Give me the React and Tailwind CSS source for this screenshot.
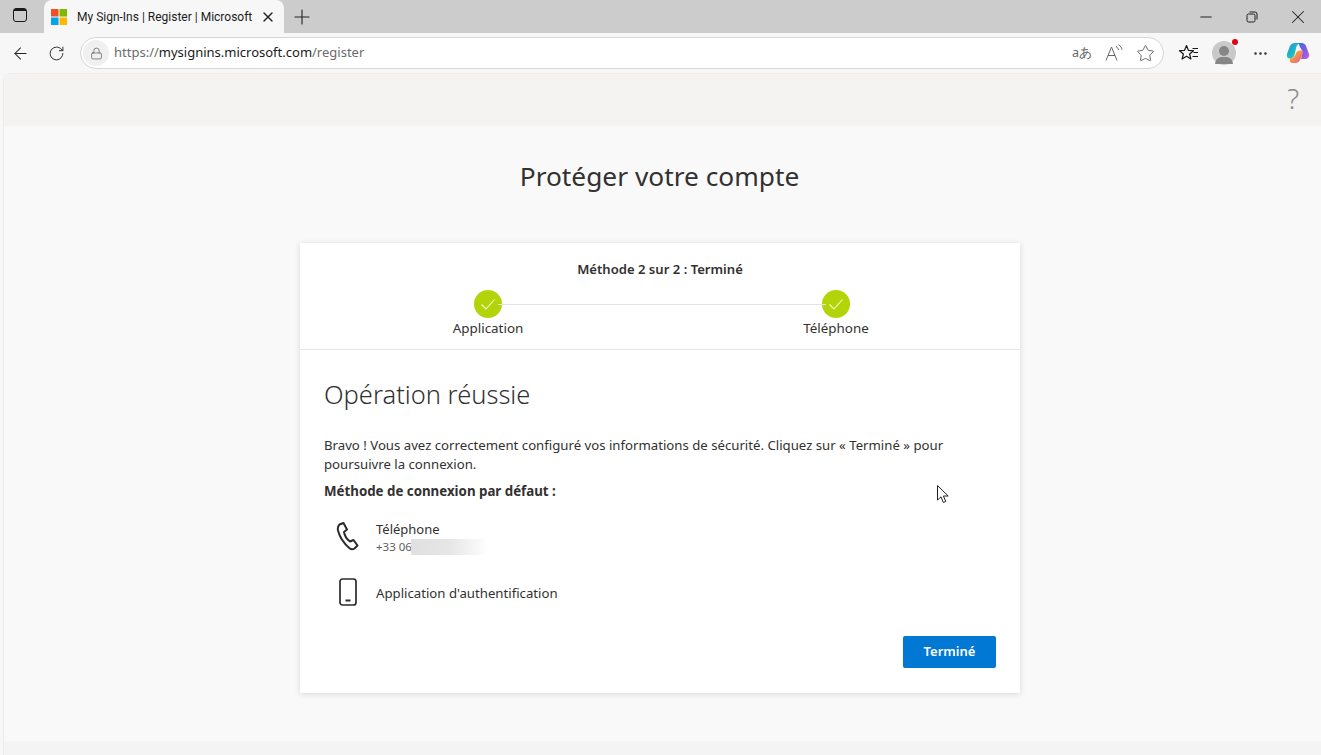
import React from 'react';
import { ArrowLeft, RotateCw, Lock, Star, Plus, X, Minus, MoreHorizontal } from 'lucide-react';

const MsLogo = () => (
  <svg width="16" height="16" viewBox="0 0 16 16" className="shrink-0">
    <rect x="0" y="0" width="7.500" height="7.500" fill="#f25022" />
    <rect x="8.500" y="0" width="7.500" height="7.500" fill="#7fba00" />
    <rect x="0" y="8.500" width="7.500" height="7.500" fill="#00a4ef" />
    <rect x="8.500" y="8.500" width="7.500" height="7.500" fill="#ffb900" />
  </svg>
);

const CopilotLogo = () => (
  <svg width="24" height="24" viewBox="0 0 24 24">
    <defs>
      <linearGradient id="cpA" x1="0" y1="0" x2="1" y2="1">
        <stop offset="0" stopColor="#1f8fe8" />
        <stop offset="0.6" stopColor="#1fc0c0" />
        <stop offset="1" stopColor="#7bd24a" />
      </linearGradient>
      <linearGradient id="cpB" x1="0" y1="0" x2="1" y2="1">
        <stop offset="0" stopColor="#2f6fe8" />
        <stop offset="0.5" stopColor="#7a5ae8" />
        <stop offset="1" stopColor="#d65ad8" />
      </linearGradient>
      <linearGradient id="cpC" x1="0" y1="0" x2="1" y2="1">
        <stop offset="0" stopColor="#f7c433" />
        <stop offset="0.6" stopColor="#f2805a" />
        <stop offset="1" stopColor="#e85aa8" />
      </linearGradient>
    </defs>
    <path d="M9 2h5c-2 .5-3.200 2.500-3.800 4.500L8.500 14c-.6 2-2.500 3.500-4.500 3.500C1.500 17.500.3 15.500 1 13L3.500 6C4.500 3.500 6.500 2 9 2Z" fill="url(#cpA)" />
    <path d="M12 2h3.500c2.500 0 4 1.500 4.700 3.500l2.800 7.500c.7 2.500-1 5-3.500 5h-4.500l1-4c.5-2 .5-3-.3-5L14 6c-.5-1.500-1-3-2-4Z" fill="url(#cpB)" />
    <path d="M4 17.500c2.500 0 4.300-1.200 5.300-3.500l.7-2c.8-1.500 2-2.500 3.500-2.500h3.500c-.5 3.500-1.500 7-3 9.500-1 2-2.500 3-4.500 3H7c-2.500 0-4-1.500-3-4.500Z" fill="url(#cpC)" />
  </svg>
);

const FavoritesIcon = () => (
  <svg width="20" height="18" viewBox="0 0 20 18" fill="none" stroke="#1a1a1a" strokeWidth="1.200" strokeLinejoin="round">
    <path d="M7.500 1.500 9.400 6.300l5.100.4-3.900 3.300 1.300 5-4.400-2.700L3.100 15 4.400 10 .5 6.700l5.100-.4Z" />
    <path d="M13.500 4.500h5.500M14.500 8.500h4.500M13.500 12.500h5.500" />
  </svg>
);

const ReadAloudIcon = () => (
  <svg width="20" height="18" viewBox="0 0 20 18" fill="none" stroke="#666" strokeWidth="1">
    <path d="M1 16.500 6.500 3l5.500 13.500M3 11.500h7" />
    <path d="M11 2.500c1.500.8 2.300 2 2.500 3.500M13.500 .8c2 1 3.200 2.800 3.500 5" />
  </svg>
);

const StepCheck = () => (
  <div className="w-7 h-7 rounded-full bg-[#b4d40a] flex items-center justify-center">
    <svg width="16" height="16" viewBox="0 0 16 16" fill="none" stroke="#f4f9d0" strokeWidth="1.100">
      <path d="M1.500 8.500 6 13 14.500 3.500" />
    </svg>
  </div>
);

const PhoneIcon = () => (
  <svg width="24" height="30" viewBox="0 0 24 30" fill="none" stroke="#2b2b2b" strokeWidth="2" strokeLinejoin="round">
    <path d="M3.500 3.500 7.500 2l3.500 6.500-3 2.500c.5 3 3 7.500 6 9.500l3.500-1.500 4 5.500-3 3c-1.500 1-3.500.8-5-.3C8 22.500 3.500 15.500 2 9.500c-.5-2.500 0-4.500 1.500-6Z" />
  </svg>
);

const MobileIcon = () => (
  <svg width="18" height="28" viewBox="0 0 18 28" fill="none" stroke="#2b2b2b" strokeWidth="1.700">
    <rect x="1" y="1" width="16" height="26" rx="2.500" />
    <path d="M6.500 22.500h5" strokeWidth="2" />
  </svg>
);

const Cursor = () => (
  <svg width="12" height="19" viewBox="0 0 12 19" className="absolute left-[937px] top-[485px]" fill="#fff" stroke="#222" strokeWidth="1">
    <path d="M.500.500v14.500l3.500-3.200 2.300 5.700 2.500-1-2.400-5.500h4.800Z" />
  </svg>
);

const BrowserChrome = () => (
  <div>
    <div className="h-[33px] bg-[#cccccc] flex items-end">
      <div className="w-[40px] h-[33px] flex items-center justify-center">
        <div className="w-[14px] h-[14px] rounded-[3px] border-[1.500px] border-[#1a1a1a] mt-[-3px]">
          <div className="h-[2px] bg-[#1a1a1a]" />
        </div>
      </div>
      <div className="ml-[4px] w-[240px] h-[33px] bg-[#f7f7f7] rounded-t-lg flex items-center pl-[7px] pr-[8px] gap-[10px]">
        <MsLogo />
        <span className="text-[12px] text-[#1c1c1c] w-[179px] font-['Roboto',sans-serif] whitespace-nowrap">My Sign-Ins | Register | Microsoft</span>
        <X size={16} strokeWidth={2} className="text-[#222] shrink-0 -ml-[2px]" />
      </div>
      <div className="w-[36px] h-[33px] flex items-center justify-center">
        <Plus size={24} strokeWidth={1.100} className="text-[#222]" />
      </div>
      <div className="flex-1" />
      <div className="h-[33px] flex items-center text-[#222]">
        <div className="w-[46px] flex justify-center"><Minus size={18} strokeWidth={1.400} /></div>
        <div className="w-[46px] flex justify-center">
          <svg width="12" height="12" viewBox="0 0 12 12" fill="none" stroke="#222" strokeWidth="1">
            <rect x="1" y="3" width="8" height="8" rx="1.500" />
            <path d="M3.500 1h5.500a2 2 0 0 1 2 2v5.500" />
          </svg>
        </div>
        <div className="w-[46px] flex justify-center"><X size={22} strokeWidth={1.100} /></div>
      </div>
    </div>
    <div className="h-[40px] bg-[#f7f7f7] flex items-center pl-[11px] pr-[11px]">
      <ArrowLeft size={19} strokeWidth={1.300} className="text-[#222]" />
      <RotateCw size={17} strokeWidth={1.300} className="text-[#222] ml-[18px]" />
      <div className="ml-[15px] w-[1084px] h-[32px] bg-white rounded-full border border-[#d6d6d6] flex items-center pl-[2px] pr-[8px]">
        <div className="w-[26px] h-[26px] rounded-full bg-[#f0f0f0] flex items-center justify-center">
          <Lock size={13} strokeWidth={1.300} className="text-[#555]" />
        </div>
        <span className="ml-[5px] text-[13px] text-[#6b6b6b]">
          https://<span className="text-[#1a1a1a]">mysignins.microsoft.com</span>/register
        </span>
        <div className="flex-1" />
        <span className="text-[12.500px] text-[#666] whitespace-nowrap mr-[13px]">aあ</span>
        <ReadAloudIcon />
        <Star size={19} strokeWidth={1.100} className="text-[#555] ml-[11px]" />
      </div>
      <div className="ml-[15px] flex">
        <FavoritesIcon />
      </div>
      <div className="ml-[13px] relative w-[24px] h-[24px] rounded-full bg-[#c9c9c9] overflow-visible flex flex-col items-center pt-[5px]">
        <div className="w-[10px] h-[10px] rounded-full bg-[#868686]" />
        <div className="w-[18px] h-[7px] mt-[1px] rounded-t-full bg-[#868686]" />
        <div className="absolute right-[-2px] top-[-2px] w-[6px] h-[6px] rounded-full bg-[#e3000f]" />
      </div>
      <MoreHorizontal size={17} strokeWidth={1.500} className="ml-[16px] text-[#222]" />
      <div className="ml-[17px]"><CopilotLogo /></div>
    </div>
  </div>
);

const StepHeader = () => (
  <div className="h-[107px] border-b border-[#e6e6e6] pt-[17px]">
    <p className="text-center text-[13.100px] font-semibold text-[#323130] leading-[19px]">Méthode 2 sur 2 : Terminé</p>
    <div className="relative ml-[128px] mr-[124px] mt-[11px]">
      <div className="absolute left-[70px] right-[70px] top-[14px] h-px bg-[#e3e3e3]" />
      <div className="flex justify-between">
        <div className="w-[120px] flex flex-col items-center">
          <StepCheck />
          <span className="text-[13.400px] leading-[20px] text-[#323130]">Application</span>
        </div>
        <div className="w-[120px] flex flex-col items-center">
          <StepCheck />
          <span className="text-[13.400px] leading-[20px] text-[#323130]">Téléphone</span>
        </div>
      </div>
    </div>
  </div>
);

const App = () => {
  return (
    <div className="relative w-[1321px] h-[755px] overflow-hidden bg-[#f7f7f7] font-['Noto_Sans',sans-serif]">
      <BrowserChrome />
      <div className="ml-[3px] h-[682px] rounded-tl-lg border-t border-l border-[#ececec] bg-[#f9f9f9] flex flex-col">
        <div className="h-[52px] bg-[#f4f3f1] flex justify-end pr-[22px] pt-[6px]">
          <span className="text-[28px] font-light leading-[36px] text-[#8a8a8a]">?</span>
        </div>
        <h1 className="mt-[31px] text-center text-[26.300px] leading-[38px] text-[#323130] pr-[6px]">Protéger votre compte</h1>
        <div className="mt-[48px] ml-[296px] w-[720px] h-[450px] bg-white shadow-[0_1px_6px_rgba(0,0,0,0.14)]">
          <StepHeader />
          <div className="px-[24px] pt-[26px]">
            <h2 className="text-[25.500px] font-light leading-[36px] text-[#323130]">Opération réussie</h2>
            <p className="mt-[24px] text-[13.200px] leading-[19px] text-[#323130]">
              Bravo ! Vous avez correctement configuré vos informations de sécurité. Cliquez sur « Terminé » pour poursuivre la connexion.
            </p>
            <p className="mt-[8px] text-[13.300px] leading-[19px] font-bold text-[#323130]">Méthode de connexion par défaut :</p>
            <div className="mt-[19px] flex items-center h-[36px]">
              <div className="w-[52px] pl-[12px] -mt-[4px]"><PhoneIcon /></div>
              <div>
                <p className="text-[13px] leading-[17px] text-[#323130]">Téléphone</p>
                <div className="flex items-center">
                  <span className="text-[11.500px] leading-[18px] text-[#605e5c] w-[35px] whitespace-nowrap overflow-hidden">+33 06</span>
                  <div className="w-[77px] h-[16px] bg-gradient-to-r from-[#e0e0e0] via-[#e6e6e6] to-white" />
                </div>
              </div>
            </div>
            <div className="mt-[22px] flex items-center h-[30px]">
              <div className="w-[52px] pl-[15px] -mt-[2px]"><MobileIcon /></div>
              <p className="text-[13.200px] leading-[19px] text-[#323130]">Application d'authentification</p>
            </div>
            <div className="mt-[28px] flex justify-end">
              <button className="w-[93px] h-[32px] rounded-[2px] bg-[#0078d4] text-white text-[13px] font-semibold">Terminé</button>
            </div>
          </div>
        </div>
        <div className="flex-1" />
        <div className="h-[14px] bg-[#f4f4f4]" />
      </div>
      <Cursor />
    </div>
  );
};

export default App;
